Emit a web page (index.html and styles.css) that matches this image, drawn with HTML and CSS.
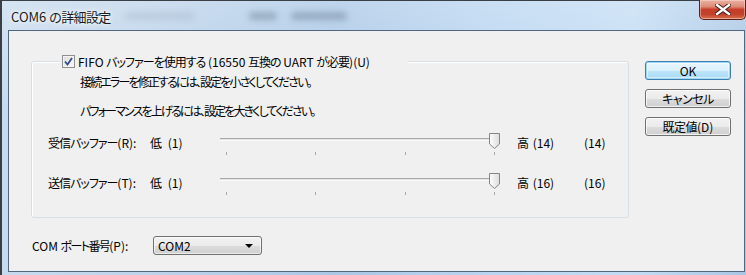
FILE: index.html
```html
<!DOCTYPE html>
<html lang="ja">
<head>
<meta charset="utf-8">
<title>COM6 の詳細設定</title>
<link rel="stylesheet" href="styles.css">
</head>
<body>
<div class="window">
  <div class="titlebar">
    <span class="title">COM6 <span class="j">の詳細設定</span></span>
    <span class="ghost"><span class="g1"></span><span class="g2"></span><span class="g3"></span></span>
    <button class="close" aria-label="閉じる">
      <svg width="16" height="11" viewBox="0 0 16 11"><path d="M2 1 L14 10 M14 1 L2 10" stroke="#3b1a14" stroke-width="4.2" stroke-linecap="square"/><path d="M2 1 L14 10 M14 1 L2 10" stroke="#fff" stroke-width="2.4" stroke-linecap="square"/></svg>
    </button>
  </div>
  <div class="client">
    <div class="main">
      <div class="group">
        <label class="legend">
          <span class="checkbox"><svg width="9" height="9" viewBox="0 0 9 9"><path d="M1 4.5 L3.5 7.5 L8 1" fill="none" stroke="#2c4f8f" stroke-width="1.8"/></svg></span>
          <span class="legend-text">FIFO <span class="j">バッファーを使用する</span> (16550 <span class="j">互換の</span> UART <span class="j">が必要</span>)(U)</span>
        </label>
        <p class="hint first">接続エラーを修正するには、設定を小さくしてください。</p>
        <p class="hint second">パフォーマンスを上げるには、設定を大きくしてください。</p>
        <div class="slider-row">
          <span class="lbl"><span class="j">受信バッファー</span>(R):</span>
          <span class="low">低 (1)</span>
          <div class="slider">
            <div class="track"></div>
            <div class="ticks"><i></i><i></i><i></i><i></i></div>
            <svg class="thumb" width="11" height="16" viewBox="0 0 11 16"><defs><linearGradient id="tg1" x1="0" y1="0" x2="1" y2="0"><stop offset="0" stop-color="#fdfdfd"/><stop offset="1" stop-color="#dcdcdc"/></linearGradient></defs><path d="M0.5 0.5 H10.5 V11 L5.5 15.5 L0.5 11 Z" fill="url(#tg1)" stroke="#858585"/></svg>
          </div>
          <span class="high">高 (14)</span>
          <span class="val">(14)</span>
        </div>
        <div class="slider-row second-row">
          <span class="lbl"><span class="j">送信バッファー</span>(T):</span>
          <span class="low">低 (1)</span>
          <div class="slider">
            <div class="track"></div>
            <div class="ticks"><i></i><i></i><i></i><i></i></div>
            <svg class="thumb" width="11" height="16" viewBox="0 0 11 16"><path d="M0.5 0.5 H10.5 V11 L5.5 15.5 L0.5 11 Z" fill="url(#tg1)" stroke="#858585"/></svg>
          </div>
          <span class="high">高 (16)</span>
          <span class="val">(16)</span>
        </div>
      </div>
      <div class="port-row">
        <span class="port-label">COM <span class="j j2">ポート番号</span>(P):</span>
        <div class="select"><span>COM2</span><span class="arrow"></span></div>
      </div>
    </div>
    <div class="buttons">
      <button class="btn default">OK</button>
      <button class="btn"><span class="j">キャンセル</span></button>
      <button class="btn"><span class="j">既定値</span>(D)</button>
    </div>
  </div>
</div>
</body>
</html>
```

FILE: styles.css
```css
* { box-sizing: border-box; }
html, body { margin: 0; padding: 0; background: #9fbfdf; }
body {
  width: 746px; height: 275px; overflow: hidden;
  font-family: "Noto Sans CJK JP", "Liberation Sans", sans-serif;
  font-size: 12px; color: #000;
}
.j { font-feature-settings: "palt"; letter-spacing: -1px; }
.j2 { letter-spacing: -1.6px; }
.window {
  position: relative;
  width: 746px; height: 275px;
  border-top: 1px solid #3a3f45;
  border-left: 2px solid #3a3f45;
  background:
    linear-gradient(180deg, rgba(255,255,255,0.25) 0%, rgba(255,255,255,0) 40%),
    linear-gradient(90deg, #c8dbee 0%, #bdd3ea 20%, #a9c7e6 45%, #b8d4f0 65%, #c3dcf4 85%, #a8c6e4 100%);
  display: flex; flex-direction: column;
}
.titlebar {
  position: relative;
  height: 29px;
  display: flex; align-items: center;
  padding-left: 9px;
}
.title {
  font-size: 13px;
  color: #1a1a1a;
  text-shadow: 0 0 6px #fff, 0 0 3px #fff;
  margin-top: 1px;
  white-space: nowrap;
}
.title .j { letter-spacing: -0.6px; }
.ghost { display: flex; gap: 14px; margin-left: 14px; filter: blur(3px); opacity: 0.5; }
.ghost span { height: 8px; background: #6f8197; border-radius: 4px; }
.g1 { width: 70px; opacity: .35; }
.g2 { width: 28px; margin-left: 40px; }
.g3 { width: 56px; }
.close {
  position: absolute; top: -1px; right: 0px;
  width: 47px; height: 20px;
  border: 1px solid #5a2018; border-top: none;
  border-radius: 0 0 5px 5px;
  background: linear-gradient(180deg, #eab2a4 0%, #dd8a76 35%, #c63e2a 50%, #c14129 75%, #d77250 100%);
  box-shadow: inset 0 0 0 1px rgba(255,220,210,0.5);
  padding: 0; display: flex; align-items: center; justify-content: center;
}
.client {
  margin-left: 6px;
  width: 737px;
  height: 242px;
  border: 1px solid #50677f;
  background: #f0f0f0;
  display: flex;
  padding: 30px 0 0 22px;
}
.main { width: 598px; display: flex; flex-direction: column; }
.group {
  position: relative;
  width: 598px; height: 157px;
  border: 1px solid #d5dfe5;
  border-radius: 3px;
  box-shadow: inset 1px 1px 0 #fff;
  padding: 10px 0 0 16px;
}
.legend {
  position: absolute; top: -8px; left: 28px;
  width: 348px; height: 15px;
  background: #f0f0f0;
  display: flex; align-items: center;
  line-height: 15px;
  padding-left: 2px;
}
.legend-text { white-space: nowrap; }
.checkbox {
  width: 13px; height: 13px;
  border: 1px solid #8e8f8f;
  background: linear-gradient(135deg, #dcdcdc, #fbfbfb);
  box-shadow: inset 0 0 0 1px #f4f4f4;
  display: flex; align-items: center; justify-content: center;
  margin-right: 3px;
}
.hint {
  margin: 0 0 0 32px; line-height: 20px;
  font-feature-settings: "palt"; letter-spacing: -1.85px;
  white-space: nowrap;
}
.hint.second { margin-top: 9px; }
.slider-row {
  display: grid;
  grid-template-columns: 102px 70px 277px 20px 67px 40px;
  align-items: start;
  height: 26px;
  margin-top: 11px;
}
.slider-row.second-row { margin-top: 14px; }
.slider-row > span { line-height: 22px; white-space: nowrap; }
.low { word-spacing: 3px; }
.high { grid-column: 5; word-spacing: 1px; }
.val { grid-column: 6; }
.slider { position: relative; height: 26px; }
.track {
  position: absolute; left: 0; right: 0; top: 6px;
  height: 3px;
  border-top: 1px solid #a9a9a9;
  background: #e3e3e3;
  border-bottom: 1px solid #fbfbfb;
}
.ticks {
  position: absolute; left: 6px; width: 269px; top: 20px;
  display: flex; justify-content: space-between;
}
.ticks i { width: 1px; height: 3px; background: #a7a7a7; }
.thumb { position: absolute; left: 269px; top: 1px; }
.port-row {
  display: flex; align-items: center;
  margin-top: 16px; margin-left: 1px;
  height: 22px;
}
.port-label { width: 121px; white-space: nowrap; }
.select {
  width: 109px; height: 19px;
  border: 1px solid #707070;
  border-radius: 3px;
  background: linear-gradient(180deg, #f2f2f2 0%, #ebebeb 50%, #dddddd 51%, #cfcfcf 100%);
  box-shadow: inset 0 0 0 1px rgba(255,255,255,0.6);
  display: flex; align-items: center; justify-content: space-between;
  padding: 0 8px 0 4px;
  line-height: 17px;
}
.arrow {
  width: 0; height: 0;
  border-left: 4px solid transparent; border-right: 4px solid transparent;
  border-top: 4px solid #000;
  margin-top: 1px;
}
.buttons {
  margin-left: 16px;
  display: flex; flex-direction: column; gap: 9px;
}
.btn {
  width: 86px; height: 19px;
  border: 1px solid #707070;
  border-radius: 3px;
  background: linear-gradient(180deg, #f2f2f2 0%, #ebebeb 50%, #dddddd 51%, #cfcfcf 100%);
  box-shadow: inset 0 0 0 1px rgba(255,255,255,0.7);
  font-family: inherit; font-size: 12px; color: #000;
  padding: 0; line-height: 17px;
}
.btn .j { letter-spacing: -0.5px; }
.btn.default {
  border-color: #3c7fb1;
  background: linear-gradient(180deg, #eaf6fd 0%, #d9f0fc 50%, #bee6fd 51%, #a7d9f5 100%);
  box-shadow: inset 0 0 0 1px #9ed8f5, inset 0 0 0 2px rgba(255,255,255,0.5);
}
```
